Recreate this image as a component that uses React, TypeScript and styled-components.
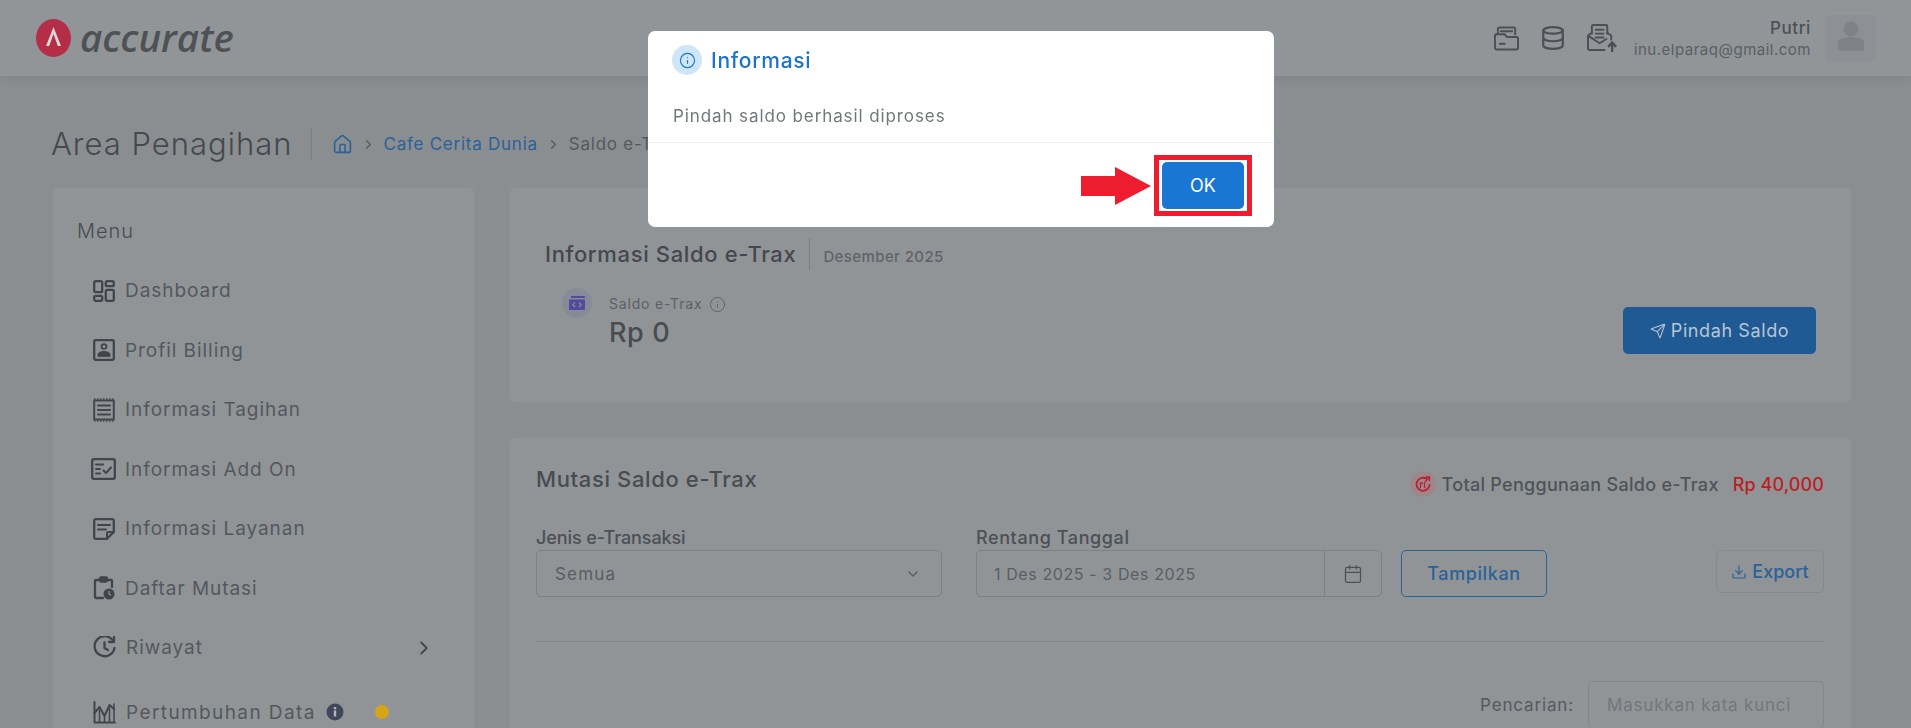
import styled, { createGlobalStyle } from "styled-components";
import { ChevronRight, ChevronDown, Calendar, Download, Send, Info, House, Database } from "lucide-react";

const GlobalStyle = createGlobalStyle`
  html, body {
    margin: 0;
    height: 100%;
    overflow: hidden;
    background: #8a8e91;
  }
  * { box-sizing: border-box; }
  body {
    font-family: Inter, "Liberation Sans", sans-serif;
    color: #4c5055;
  }
`;

const Page = styled.div`
  height: 728px;
  overflow: hidden;
`;

const Header = styled.header`
  height: 76px;
  background: #919598;
  display: flex;
  align-items: center;
  justify-content: space-between;
  padding: 0 35px 0 36px;
  box-shadow: 0 2px 10px rgba(60, 64, 68, 0.12);
`;

const Logo = styled.div`
  display: flex;
  align-items: center;
  gap: 9px;
`;

const LogoText = styled.span`
  font-family: "Open Sans", sans-serif;
  font-style: italic;
  font-weight: 600;
  font-size: 38.5px;
  line-height: 40px;
  margin-top: -3px;
  color: #4e5256;
`;

const HeaderRight = styled.div`
  display: flex;
  align-items: center;
`;

const HeaderIcons = styled.div`
  display: flex;
  align-items: center;
  gap: 21px;
  color: #4c5055;
  margin-right: 17px;
`;

const User = styled.div`
  display: flex;
  flex-direction: column;
  align-items: flex-end;
  gap: 3px;
  margin-right: 15px;
`;

const UserName = styled.span`
  font-size: 17px;
  line-height: 20px;
  font-weight: 500;
  letter-spacing: 0.6px;
`;

const UserMail = styled.span`
  font-size: 15px;
  line-height: 18px;
  letter-spacing: 0.5px;
  color: #5a5e63;
`;

const Avatar = styled.div`
  width: 50px;
  height: 47px;
  border-radius: 5px;
  background: #8d9094;
  display: flex;
  align-items: center;
  justify-content: center;
  color: #7f8286;
`;

const TitleRow = styled.div`
  height: 112px;
  padding: 24px 0 0 51px;
  display: flex;
  align-items: center;
`;

const PageTitle = styled.h1`
  margin: -2px 0 0;
  font-size: 31px;
  font-weight: 300;
  letter-spacing: 1px;
  color: #45494e;
`;

const TitleDivider = styled.span`
  width: 1px;
  height: 34px;
  background: #7b7f83;
  margin: 0 20px 0 18px;
`;

const Crumbs = styled.nav`
  display: flex;
  align-items: center;
  font-size: 17px;
  letter-spacing: 0.75px;
  gap: 8px;
  color: #55595e;
`;

const CrumbLink = styled.a`
  color: #2a6298;
`;

const Body = styled.div`
  display: flex;
  gap: 36px;
  padding-left: 53px;
  align-items: flex-start;
`;

const Sidebar = styled.aside`
  width: 421px;
  height: 620px;
  flex: none;
  background: #909497;
  border-radius: 5px;
  padding: 30px 24px;
`;

const MenuTitle = styled.div`
  font-size: 20px;
  line-height: 26px;
  font-weight: 300;
  letter-spacing: 1px;
  margin-bottom: 17px;
  color: #484c51;
`;

const MenuItem = styled.div<{ $gapTop?: number; $tracking?: number }>`
  height: 59.5px;
  padding-left: 16px;
  margin-top: ${(p) => p.$gapTop ?? 0}px;
  display: flex;
  align-items: center;
  gap: 10px;
  font-size: 19px;
  letter-spacing: ${(p) => p.$tracking ?? 0.95}px;
  color: #54585d;
  position: relative;
  svg { flex: none; color: #42464b; }
`;

const MenuChevron = styled(ChevronRight)`
  position: absolute;
  right: 15px;
`;

const WideIcon = styled.svg`
  margin: 0 -1px 0 -2px;
`;

const Dot = styled.span`
  width: 14px;
  height: 14px;
  border-radius: 50%;
  background: #d6a516;
  margin-left: 21px;
`;

const Main = styled.main`
  width: 1341px;
  display: flex;
  flex-direction: column;
  gap: 36px;
`;

const Card = styled.section`
  background: #909497;
  border-radius: 5px;
`;

const BalanceCard = styled(Card)`
  height: 214px;
  padding: 50px 35px 0;
  display: flex;
  justify-content: space-between;
  align-items: flex-start;
`;

const SectionTitle = styled.div`
  display: flex;
  align-items: center;
  height: 32px;
`;

const BalanceTitle = styled.span`
  font-size: 22px;
  font-weight: 500;
  letter-spacing: 0.65px;
  color: #44484e;
`;

const Period = styled.span`
  font-size: 15px;
  font-weight: 500;
  letter-spacing: 0.4px;
  color: #5f6368;
  border-left: 1px solid #7b7f83;
  height: 32px;
  line-height: 38px;
  margin-left: 13px;
  padding-left: 13px;
`;

const BalanceRow = styled.div`
  display: flex;
  margin: 18px 0 0 17px;
  gap: 17px;
`;

const IconCircle = styled.div<{ $bg: string; $size: number }>`
  width: ${(p) => p.$size}px;
  height: ${(p) => p.$size}px;
  border-radius: 50%;
  background: ${(p) => p.$bg};
  display: flex;
  align-items: center;
  justify-content: center;
  flex: none;
`;

const BalanceInfo = styled.div`
  margin-top: 6px;
  display: flex;
  flex-direction: column;
  gap: 3px;
`;

const BalanceLabel = styled.span`
  display: flex;
  align-items: center;
  gap: 7px;
  font-size: 14px;
  line-height: 20px;
  letter-spacing: 0.8px;
  color: #5c6065;
`;

const BalanceValue = styled.span`
  font-size: 27px;
  line-height: 32px;
  font-weight: 500;
  letter-spacing: 0.6px;
  color: #484c51;
`;

const PrimaryButton = styled.button`
  margin-top: 69px;
  width: 193px;
  height: 47px;
  border: 0;
  border-radius: 5px;
  background: #1f5a95;
  color: #b9c6d3;
  font: inherit;
  font-size: 18px;
  letter-spacing: 0.6px;
  display: flex;
  align-items: center;
  justify-content: center;
  gap: 5px;
`;

const MutationCard = styled(Card)`
  height: 320px;
  padding: 27px 27px 0 26px;
`;

const MutationHead = styled.div`
  display: flex;
  justify-content: space-between;
  align-items: flex-start;
  height: 28px;
`;

const MutationTitle = styled.span`
  font-size: 22px;
  line-height: 28px;
  font-weight: 500;
  letter-spacing: 0.63px;
  color: #484c51;
`;

const Total = styled.div`
  display: flex;
  align-items: center;
  margin-top: 6px;
  font-size: 18px;
  font-weight: 500;
  letter-spacing: 0.3px;
  color: #4f5358;
`;

const TotalLabel = styled.span`
  margin-left: 6px;
`;

const TotalValue = styled.span`
  margin-left: 14px;
  letter-spacing: 0.1px;
  color: #bd1e24;
`;

const Filters = styled.div`
  display: flex;
  align-items: flex-start;
  margin-top: 34px;
`;

const Field = styled.div<{ $ml?: number }>`
  width: 406px;
  margin-left: ${(p) => p.$ml ?? 0}px;
`;

const FieldLabel = styled.label<{ $tracking: number }>`
  display: block;
  font-size: 18px;
  line-height: 22px;
  margin-bottom: 1px;
  font-weight: 500;
  letter-spacing: ${(p) => p.$tracking}px;
  color: #4c5055;
`;

const Select = styled.div`
  height: 47px;
  border: 1px solid #7d8185;
  border-radius: 5px;
  display: flex;
  align-items: center;
  justify-content: space-between;
  padding: 0 20px 0 18px;
  font-size: 17px;
  letter-spacing: 1.2px;
  color: #5a5e63;
`;

const DateBox = styled(Select)`
  padding: 0;
`;

const DateText = styled.span`
  flex: 1;
  padding-left: 17px;
  font-size: 16px;
  letter-spacing: 0.6px;
`;

const DateAddon = styled.span`
  width: 57px;
  height: 100%;
  border-left: 1px solid #7d8185;
  display: flex;
  align-items: center;
  justify-content: center;
  color: #4c5055;
`;

const OutlineButton = styled.button`
  margin: 23px 0 0 19px;
  width: 146px;
  height: 47px;
  border: 1px solid #2a6298;
  border-radius: 5px;
  background: transparent;
  color: #2a6298;
  font: inherit;
  font-size: 18px;
  font-weight: 500;
  letter-spacing: 0.6px;
`;

const ExportButton = styled.button`
  margin: 23px 0 0 auto;
  width: 108px;
  height: 43px;
  border: 1px solid #868a8e;
  border-radius: 5px;
  background: transparent;
  color: #2a6298;
  font: inherit;
  font-size: 18px;
  font-weight: 500;
  display: flex;
  align-items: center;
  justify-content: center;
  gap: 5px;
`;

const Rule = styled.hr`
  border: 0;
  border-top: 1px solid #83878b;
  margin: 44px 0 39px;
`;

const SearchRow = styled.div`
  display: flex;
  justify-content: flex-end;
  align-items: center;
  gap: 14px;
  font-size: 17px;
  letter-spacing: 0.85px;
  color: #55595e;
`;

const SearchBox = styled.div`
  width: 236px;
  height: 48px;
  border: 1px solid #83878b;
  border-radius: 5px;
  padding: 0 33px 0 18px;
`;

const SearchPlaceholder = styled.div`
  line-height: 46px;
  white-space: nowrap;
  overflow: hidden;
  letter-spacing: 0.8px;
  color: #73777b;
`;

const Modal = styled.div`
  position: fixed;
  left: 648px;
  top: 31px;
  width: 626px;
  height: 196px;
  background: #fff;
  border-radius: 7px;
  display: flex;
  flex-direction: column;
`;

const ModalHead = styled.div`
  display: flex;
  align-items: center;
  gap: 9px;
  padding: 14px 24px 0;
`;

const ModalTitle = styled.span`
  font-size: 21px;
  font-weight: 500;
  letter-spacing: 0.7px;
  color: #1b74c8;
`;

const ModalText = styled.p`
  margin: 29px 25px 0;
  font-size: 17px;
  line-height: 24px;
  letter-spacing: 0.9px;
  color: #73777c;
`;

const ModalFoot = styled.div`
  margin-top: 14px;
  border-top: 1px solid #eceef0;
  padding: 12px 22px 0 0;
  display: flex;
  justify-content: flex-end;
  align-items: center;
  gap: 3px;
`;

const Highlight = styled.div`
  border: 5px solid #ed1c2e;
  padding: 2px 3px;
`;

const OkButton = styled.button`
  display: block;
  width: 82px;
  height: 47px;
  border: 0;
  border-radius: 5px;
  background: #1976d2;
  color: #fff;
  font: inherit;
  font-size: 18px;
  font-weight: 400;
`;

const stroke = { fill: "none", stroke: "currentColor", strokeWidth: 2.3, strokeLinejoin: "round" as const, strokeLinecap: "round" as const };

const Icons = {
  dashboard: (
    <svg width="22" height="22" viewBox="0 0 22 22" {...stroke}>
      <rect x="1.200" y="1.200" width="8" height="11" rx="1.500" />
      <rect x="12.800" y="1.200" width="8" height="5" rx="1.500" />
      <rect x="1.200" y="15.800" width="8" height="5" rx="1.500" />
      <rect x="12.800" y="9.800" width="8" height="11" rx="1.500" />
    </svg>
  ),
  profile: (
    <svg width="22" height="22" viewBox="0 0 22 22" {...stroke}>
      <rect x="1.200" y="1.200" width="19.600" height="19.600" rx="1.500" />
      <circle cx="11" cy="7.500" r="2.400" strokeWidth="1.800" />
      <path d="M5 17v-1.500c0-1.800 2.500-3 6-3s6 1.200 6 3V17z" fill="currentColor" strokeWidth="1" />
    </svg>
  ),
  bill: (
    <svg width="22" height="24" viewBox="0 0 22 24" {...stroke}>
      <path d="M1.200 2.500h19.600v19H1.200z" strokeWidth="2" />
      <path d="M5 7.500h12M5 12h12M5 16.500h12" strokeWidth="2" />
      <path d="M1 1h20M1 23h20" strokeDasharray="1.500 1.500" strokeLinecap="butt" strokeWidth="1.600" />
    </svg>
  ),
  addOn: (
    <WideIcon width="25" height="22" viewBox="0 0 25 22" {...stroke}>
      <rect x="1.200" y="1.200" width="22.600" height="19.600" rx="1.500" />
      <path d="M5 6.500h7M5 11h4M5 15.500h4" strokeWidth="2" />
      <path d="M12.500 12.500l2.500 2.500 5-5.500" strokeWidth="2" />
    </WideIcon>
  ),
  service: (
    <svg width="22" height="22" viewBox="0 0 22 22" {...stroke}>
      <path d="M14 20.800H2.700a1.500 1.500 0 0 1-1.500-1.500V2.700a1.500 1.500 0 0 1 1.500-1.500h16.600a1.500 1.500 0 0 1 1.500 1.500V14z" />
      <path d="M5 7h12M5 11.500h8M14 20.800v-5.300a1.500 1.500 0 0 1 1.500-1.500h5.300" strokeWidth="2" />
    </svg>
  ),
  mutation: (
    <svg width="22" height="24" viewBox="0 0 22 24" {...stroke}>
      <path d="M10 22H3a1 1 0 0 1-1-1V5a1 1 0 0 1 1-1h15a1 1 0 0 1 1 1v6" />
      <rect x="7" y="1.500" width="7" height="4" rx="1" fill="currentColor" />
      <circle cx="16" cy="18" r="5.500" fill="currentColor" stroke="none" />
      <path d="M16 15.500V18l1.500 1" stroke="#909497" strokeWidth="1.300" />
    </svg>
  ),
  history: (
    <svg width="23" height="23" viewBox="0 0 23 23" {...stroke}>
      <path d="M20.500 5.500A10 10 0 1 0 21.500 12" />
      <path d="M21 1v5h-5" />
      <path d="M11.500 6.500V12l3.500 2" />
    </svg>
  ),
  growth: (
    <svg width="23" height="23" viewBox="0 0 23 23" {...stroke} strokeWidth="2">
      <path d="M1.500 1v20.500H22" />
      <path d="M1.500 12l5-6 5 9 5-11 4.500 4" />
      <path d="M6.500 21V9M11.500 21v-5M16.500 21V7M21 21V3" strokeWidth="1.500" />
    </svg>
  ),
};

const menu = [
  { icon: Icons.dashboard, label: "Dashboard" },
  { icon: Icons.profile, label: "Profil Billing" },
  { icon: Icons.bill, label: "Informasi Tagihan" },
  { icon: Icons.addOn, label: "Informasi Add On" },
  { icon: Icons.service, label: "Informasi Layanan" },
  { icon: Icons.mutation, label: "Daftar Mutasi" },
];

const InfoFilled = () => (
  <svg width="18" height="18" viewBox="0 0 18 18">
    <circle cx="9" cy="9" r="8.500" fill="#42465a" />
    <rect x="7.800" y="7.500" width="2.400" height="6" fill="#b4b8bb" />
    <rect x="7.800" y="4" width="2.400" height="2.300" fill="#b4b8bb" />
  </svg>
);

export default function App() {
  return (
    <>
      <GlobalStyle />
      <Page>
        <Header>
          <Logo>
            <svg width="35" height="38" viewBox="0 0 35 38">
              <ellipse cx="17.500" cy="19" rx="17.500" ry="19" fill="#b52e47" />
              <path d="M17.500 8 10 27h3.200l4.300-12 4.300 12H25z" fill="#dfd6d8" />
            </svg>
            <LogoText>accurate</LogoText>
          </Logo>
          <HeaderRight>
            <HeaderIcons>
              <svg width="25" height="25" viewBox="0 0 26 25" {...stroke} strokeWidth="2">
                <path d="M4 8V2.500A1.500 1.500 0 0 1 5.500 1h15A1.500 1.500 0 0 1 22 2.500V8" />
                <path d="M1 22.500v-13A1.500 1.500 0 0 1 2.500 8H11l2.500 3h10a1.500 1.500 0 0 1 1.500 1.500v10a1.500 1.500 0 0 1-1.500 1.500h-21A1.500 1.500 0 0 1 1 22.500z" />
                <path d="M7 5h12M6 18h5" />
              </svg>
              <Database size={26} strokeWidth={2} />
              <svg width="30" height="28" viewBox="0 0 31 29" {...stroke} strokeWidth="2">
                <path d="M5 10V2.500A1.500 1.500 0 0 1 6.500 1h13A1.500 1.500 0 0 1 21 2.500V10" />
                <path d="M5 9 1 12v13.500A1.500 1.500 0 0 0 2.500 27H18M21 9l4 3v4M1 12l12 8 7-4.500" />
                <path d="M9 6h8M9 10h8M9 14h8" />
                <path d="M26 28v-8M22.500 23l3.500-4 3.500 4" strokeWidth="2.500" />
              </svg>
            </HeaderIcons>
            <User>
              <UserName>Putri</UserName>
              <UserMail>inu.elparaq@gmail.com</UserMail>
            </User>
            <Avatar>
              <svg width="26" height="36" viewBox="0 0 26 36" fill="currentColor">
                <circle cx="13" cy="9" r="7.500" />
                <path d="M0 28v-5c0-4 4-6 13-6s13 2 13 6v5c0 2-1 3-3 3H3c-2 0-3-1-3-3z" />
              </svg>
            </Avatar>
          </HeaderRight>
        </Header>

        <TitleRow>
          <PageTitle>Area Penagihan</PageTitle>
          <TitleDivider />
          <Crumbs>
            <House size={21} color="#2a6298" strokeWidth={1.8} />
            <ChevronRight size={15} />
            <CrumbLink>Cafe Cerita Dunia</CrumbLink>
            <ChevronRight size={15} />
            <span>Saldo e-Trax</span>
          </Crumbs>
        </TitleRow>

        <Body>
          <Sidebar>
            <MenuTitle>Menu</MenuTitle>
            {menu.map((item) => (
              <MenuItem key={item.label}>
                {item.icon}
                {item.label}
              </MenuItem>
            ))}
            <MenuItem>
              {Icons.history}
              Riwayat
              <MenuChevron size={22} />
            </MenuItem>
            <MenuItem $gapTop={5} $tracking={1.4}>
              {Icons.growth}
              Pertumbuhan Data
              <InfoFilled />
              <Dot />
            </MenuItem>
          </Sidebar>

          <Main>
            <BalanceCard>
              <div>
                <SectionTitle>
                  <BalanceTitle>Informasi Saldo e-Trax</BalanceTitle>
                  <Period>Desember 2025</Period>
                </SectionTitle>
                <BalanceRow>
                  <IconCircle $bg="#878b96" $size={30}>
                    <svg width="18" height="16" viewBox="0 0 18 16" fill="#4f4b9f">
                      <path d="M3 1h13a1 1 0 0 1 1 1v1H3z" />
                      <path d="M1 4.500h16v10.500H1zM6.500 7 4 9.800l2.500 2.700 1-.8-1.700-1.900 1.700-2zM11.500 7l-1 .8 1.700 2-1.700 1.900 1 .8L14 9.800z" fillRule="evenodd" />
                    </svg>
                  </IconCircle>
                  <BalanceInfo>
                    <BalanceLabel>
                      Saldo e-Trax
                      <Info size={17} strokeWidth={1.3} />
                    </BalanceLabel>
                    <BalanceValue>Rp 0</BalanceValue>
                  </BalanceInfo>
                </BalanceRow>
              </div>
              <PrimaryButton>
                <Send size={16} strokeWidth={1.6} />
                Pindah Saldo
              </PrimaryButton>
            </BalanceCard>

            <MutationCard>
              <MutationHead>
                <MutationTitle>Mutasi Saldo e-Trax</MutationTitle>
                <Total>
                  <IconCircle $bg="#9e878b" $size={26}>
                    <svg width="16" height="17" viewBox="0 0 16 17" fill="none" stroke="#bd1e2c" strokeWidth="1.800" strokeLinecap="round">
                      <path d="M11 2.500A6.500 6.500 0 1 0 14.500 9" />
                      <path d="M10 6l4-4.500M11 1h3.500v3.500" strokeWidth="1.300" />
                      <path d="M5.500 11.500V7h2M9.500 11.500V7.500" strokeWidth="1.300" />
                    </svg>
                  </IconCircle>
                  <TotalLabel>Total Penggunaan Saldo e-Trax</TotalLabel>
                  <TotalValue>Rp 40,000</TotalValue>
                </Total>
              </MutationHead>

              <Filters>
                <Field>
                  <FieldLabel $tracking={-0.1}>Jenis e-Transaksi</FieldLabel>
                  <Select>
                    Semua
                    <ChevronDown size={16} />
                  </Select>
                </Field>
                <Field $ml={34}>
                  <FieldLabel $tracking={0.6}>Rentang Tanggal</FieldLabel>
                  <DateBox>
                    <DateText>1 Des 2025 - 3 Des 2025</DateText>
                    <DateAddon>
                      <Calendar size={20} strokeWidth={1.5} />
                    </DateAddon>
                  </DateBox>
                </Field>
                <OutlineButton>Tampilkan</OutlineButton>
                <ExportButton>
                  <Download size={16} strokeWidth={1.8} />
                  Export
                </ExportButton>
              </Filters>

              <Rule />

              <SearchRow>
                Pencarian:
                <SearchBox>
                  <SearchPlaceholder>Masukkan kata kunci</SearchPlaceholder>
                </SearchBox>
              </SearchRow>
            </MutationCard>
          </Main>
        </Body>

        <Modal>
          <ModalHead>
            <IconCircle $bg="#cfe6f8" $size={30}>
              <Info size={17} color="#1976d2" strokeWidth={1.6} />
            </IconCircle>
            <ModalTitle>Informasi</ModalTitle>
          </ModalHead>
          <ModalText>Pindah saldo berhasil diproses</ModalText>
          <ModalFoot>
            <svg width="70" height="38" viewBox="0 0 70 38">
              <path d="M0 9h34V0l36 19-36 19v-9H0z" fill="#ed1c2e" />
            </svg>
            <Highlight>
              <OkButton>OK</OkButton>
            </Highlight>
          </ModalFoot>
        </Modal>
      </Page>
    </>
  );
}
